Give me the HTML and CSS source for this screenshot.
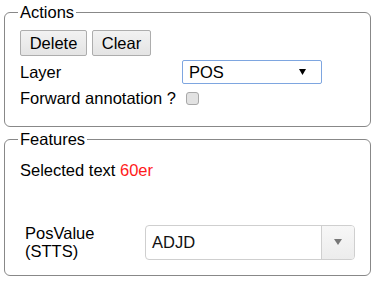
FILE: index.html
```html
<!DOCTYPE html>
<html>
<head>
<meta charset="utf-8">
<link rel="stylesheet" href="styles.css">
</head>
<body>
<fieldset class="box actions">
  <legend class="legend">Actions</legend>
  <div class="buttons">
    <button class="btn btn-delete" type="button">Delete</button>
    <button class="btn btn-clear" type="button">Clear</button>
  </div>
  <div class="layer-row">
    <span class="label">Layer</span>
    <div class="select focus">
      <span class="select-text">POS</span>
      <svg class="arrow-black" width="7" height="6" viewBox="0 0 7 6"><polygon points="0,0 7,0 3.5,6" fill="#000"/></svg>
    </div>
  </div>
  <div class="check-row">
    <span class="label">Forward annotation ?</span>
    <span class="checkbox"></span>
  </div>
</fieldset>
<fieldset class="box features">
  <legend class="legend">Features</legend>
  <div class="selected">Selected text <span class="hl">60er</span></div>
  <div class="pos-row">
    <div class="pos-label">PosValue<br>(STTS)</div>
    <div class="combo">
      <span class="combo-text">ADJD</span>
      <span class="combo-btn">
        <svg width="8" height="6" viewBox="0 0 8 6"><polygon points="0,0 8,0 4,6" fill="#777"/></svg>
      </span>
    </div>
  </div>
</fieldset>
</body>
</html>
```
FILE: styles.css
```css
html, body {
  margin: 0;
  background: #fff;
}
body {
  padding: 3px 5px 0 4px;
  font-family: "Liberation Sans", Arial, sans-serif;
  font-size: 16.5px;
  line-height: 18px;
  color: #000;
}
.box {
  margin: 0;
  border: 1px solid #888;
  border-radius: 6px;
  padding: 9px 15px 19px 15px;
  min-width: 0;
}
.features {
  margin-top: 3px;
  padding-bottom: 15px;
}
.legend {
  padding: 0 2px;
  margin-left: -2px;
  font-size: 16.5px;
  line-height: 18px;
}
.buttons {
  display: flex;
  gap: 5px;
}
.btn {
  font-family: "Liberation Sans", Arial, sans-serif;
  font-size: 16.5px;
  line-height: 18px;
  height: 26px;
  padding: 3px 0;
  border: 1px solid #adadad;
  border-radius: 2px;
  background: linear-gradient(#f2f2f2, #e4e4e4);
  color: #000;
  margin: 0;
  text-align: center;
}
.btn-delete {
  width: 67px;
}
.btn-clear {
  width: 59px;
}
.layer-row {
  display: grid;
  grid-template-columns: 162px 140px;
  align-items: center;
  margin-top: 4px;
}
.select {
  height: 24px;
  box-sizing: border-box;
  border: 1px solid #7ea6e0;
  border-radius: 2px;
  display: flex;
  align-items: center;
  justify-content: space-between;
  padding: 0 15px 0 6px;
  background: #fff;
}
.check-row {
  display: flex;
  align-items: center;
  margin-top: 5px;
  height: 18px;
}
.checkbox {
  width: 13px;
  height: 13px;
  box-sizing: border-box;
  border: 1px solid #a8a8a8;
  border-radius: 3px;
  background: #e2e2e2;
  margin-left: 10px;
  margin-top: 1px;
}
.selected {
  margin-top: 4px;
}
.hl {
  color: #ff1a1a;
}
.pos-row {
  display: grid;
  grid-template-columns: 125px 1fr;
  align-items: center;
  margin-top: 45px;
}
.pos-label {
  padding-left: 5px;
}
.combo {
  height: 35px;
  box-sizing: border-box;
  border: 1px solid #cfcfcf;
  border-radius: 4px;
  display: flex;
  align-items: stretch;
  background: #fff;
  overflow: hidden;
}
.combo-text {
  flex: 1;
  display: flex;
  align-items: center;
  padding-left: 6px;
  color: #111;
}
.combo-btn {
  width: 32px;
  border-left: 1px solid #cfcfcf;
  background: linear-gradient(#f7f7f7, #ececec);
  display: flex;
  align-items: center;
  justify-content: center;
}
```
